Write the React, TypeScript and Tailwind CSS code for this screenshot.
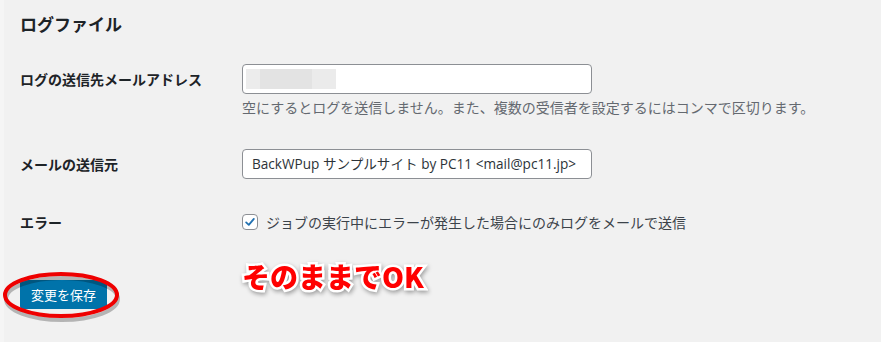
import React from 'react';

const font = "font-['Noto_Sans_CJK_JP','Noto_Sans',sans-serif]";

function Checkbox() {
  return (
    <span className="flex h-4 w-4 items-center justify-center rounded-[4px] border border-[#8c8f94] bg-white">
      <svg viewBox="0 0 20 20" className="h-[18px] w-[18px]">
        <path d="M4.5 10.5 L8.3 14 L15.5 5.5" fill="none" stroke="#2271b1" strokeWidth="2.6" strokeLinecap="round" strokeLinejoin="round" />
      </svg>
    </span>
  );
}

export default function App() {
  return (
    <div className={`${font} flex h-[342px] w-[881px] bg-[#f1f1f1] text-[#1d2327]`}>
      <div className="w-1 bg-[#f5f5f5]" />
      <div className="flex flex-1 flex-col pl-4">
        <h2 className="pt-[12px] text-[17px] font-bold leading-[23px]">ログファイル</h2>

        <div className="mt-[29px] flex items-start">
          <div className="w-[222px] text-[14px] font-bold leading-[30px]">ログの送信先メールアドレス</div>
          <div className="flex flex-col">
            <div className="flex h-[30px] w-[350px] items-center rounded-[4px] border border-[#8c8f94] bg-white px-[3px]">
              <div className="flex h-[20px] w-[90px]">
                <div className="w-[14px] bg-[#ececec]" />
                <div className="w-[52px] bg-[#e3e3e3]" />
                <div className="w-[24px] bg-[#ebebeb]" />
              </div>
            </div>
            <p className="mt-[3px] text-[14px] leading-[20px] text-[#646970]">
              空にするとログを送信しません。また、複数の受信者を設定するにはコンマで区切ります。
            </p>
          </div>
        </div>

        <div className="mt-[32px] flex items-start">
          <div className="w-[222px] text-[14px] font-bold leading-[30px]">メールの送信元</div>
          <div className="flex h-[30px] w-[350px] items-center whitespace-nowrap rounded-[4px] border border-[#8c8f94] bg-white px-[9px] font-['Open_Sans','Noto_Sans_CJK_JP',sans-serif] text-[13.6px] text-[#2c3338]">
            BackWPup サンプルサイト by PC11 &lt;mail@pc11.jp&gt;
          </div>
        </div>

        <div className="mt-[31px] flex items-center">
          <div className="w-[222px] text-[14px] font-bold leading-[24px]">エラー</div>
          <label className="flex items-center gap-2 text-[14px] leading-[24px] text-[#3c434a]">
            <Checkbox />
            ジョブの実行中にエラーが発生した場合にのみログをメールで送信
          </label>
        </div>

        <div className="relative mt-[46px] flex">
          <button className="h-[29px] rounded-[3px] bg-[#0073aa] px-[11px] text-[13px] leading-[29px] text-white">
            変更を保存
          </button>
          <svg className="absolute left-[-17px] top-[-8px] overflow-visible" width="120" height="56" viewBox="0 0 120 56">
            <ellipse cx="58" cy="25" rx="56" ry="21" fill="none" stroke="rgba(0,0,0,0.25)" strokeWidth="4" transform="translate(1 2)" />
            <ellipse cx="58" cy="23" rx="56" ry="21" fill="none" stroke="#ee0000" strokeWidth="4" />
          </svg>
          <span className="absolute left-[222px] top-[-20px] text-[28px] font-black leading-[32px] text-[#ff0000] [-webkit-text-stroke:5px_white] [paint-order:stroke_fill] [filter:drop-shadow(1px_2px_2px_rgba(0,0,0,0.35))]">
            そのままでOK
          </span>
        </div>
      </div>
    </div>
  );
}
